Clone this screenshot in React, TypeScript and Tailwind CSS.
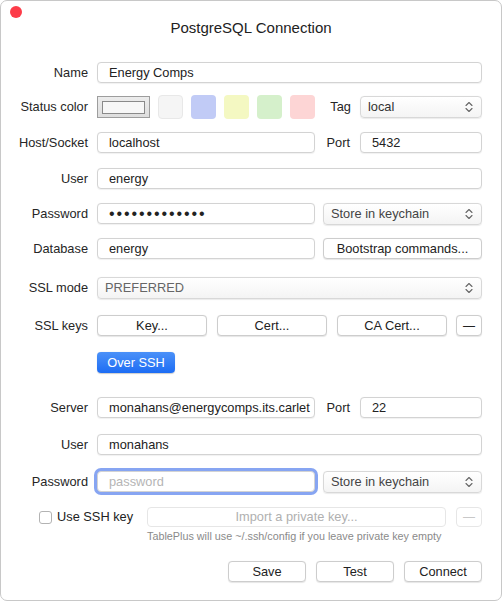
import React from "react";

const Chevrons = () => (
  <svg width="8" height="12" viewBox="0 0 8 12" fill="none" className="shrink-0">
    <path d="M1 4.5 L4 1.5 L7 4.5" stroke="#666" strokeWidth="1.1" strokeLinecap="round" strokeLinejoin="round" />
    <path d="M1 7.5 L4 10.5 L7 7.5" stroke="#666" strokeWidth="1.1" strokeLinecap="round" strokeLinejoin="round" />
  </svg>
);

const inputCls =
  "h-[21px] border border-[#d3d3d3] rounded-[4px] bg-white flex items-center pl-[11px] text-[#222] overflow-hidden whitespace-nowrap shadow-[0_0.5px_1px_rgba(0,0,0,0.06)]";
const selectCls =
  "h-[22px] border border-[#d8d8d8] rounded-[4px] bg-gradient-to-b from-white to-[#f4f4f4] flex items-center justify-between pl-[7px] pr-[8px] text-[#333] whitespace-nowrap shadow-[0_0.5px_1px_rgba(0,0,0,0.08)]";
const btnCls =
  "h-[21px] border border-[#cdcdcd] rounded-[4px] bg-white flex items-center justify-center text-[#222] whitespace-nowrap shadow-[0_0.5px_1px_rgba(0,0,0,0.1)]";

function Row({ label, mt, h = "h-[21px]", children }: { label: string; mt: string; h?: string; children?: React.ReactNode }) {
  return (
    <div className={`flex items-center ${mt} ${h}`}>
      <div className="w-[87px] shrink-0 text-right text-[#262626]">{label}</div>
      <div className="ml-[9px] w-[385px] flex items-center h-full">{children}</div>
    </div>
  );
}

export default function App() {
  return (
    <div
      className="w-[503px] h-[602px] bg-white text-[12.8px]"
      style={{ fontFamily: '"Liberation Sans", Arial, sans-serif' }}
    >
      <div className="relative w-[502px] h-[601px] border border-[#c8c8c8] rounded-[7px] bg-white overflow-hidden">
        <div className="absolute left-[9px] top-[5px] w-[12px] h-[12px] rounded-full bg-[#fd3c49]" />
        <div className="h-[55px] flex items-center justify-center text-[15px] text-[#222]">
          PostgreSQL Connection
        </div>

        <Row label="Name" mt="mt-[6px]">
          <div className={`${inputCls} w-[385px]`}>Energy Comps</div>
        </Row>

        <Row label="Status color" mt="mt-[12px]" h="h-[24px]">
          <div className="w-[53px] h-[22px] border border-[#9d9d9d] bg-gradient-to-b from-[#ececec] to-[#dedede] flex items-center justify-center">
            <div className="w-[43px] h-[13px] border border-[#8a8a8a] bg-[#f7f7f7]" />
          </div>
          <div className="ml-[8px] w-[25px] h-[24px] rounded-[4px] bg-[#f5f5f5] border border-[#e8e8e8]" />
          <div className="ml-[8px] w-[25px] h-[24px] rounded-[4px] bg-[#c1cbf6]" />
          <div className="ml-[8px] w-[25px] h-[24px] rounded-[4px] bg-[#f4f8c2]" />
          <div className="ml-[8px] w-[25px] h-[24px] rounded-[4px] bg-[#d5f0cb]" />
          <div className="ml-[8px] w-[25px] h-[24px] rounded-[4px] bg-[#fdd5d5]" />
          <div className="ml-auto flex items-center">
            <span className="text-[#262626]">Tag</span>
            <div className={`${selectCls} ml-[9px] w-[122px]`}>
              <span>local</span>
              <Chevrons />
            </div>
          </div>
        </Row>

        <Row label="Host/Socket" mt="mt-[13px]">
          <div className={`${inputCls} w-[218px]`}>localhost</div>
          <div className="ml-auto flex items-center">
            <span className="text-[#262626]">Port</span>
            <div className={`${inputCls} ml-[10px] w-[122px]`}>5432</div>
          </div>
        </Row>

        <Row label="User" mt="mt-[15px]">
          <div className={`${inputCls} w-[385px]`}>energy</div>
        </Row>

        <Row label="Password" mt="mt-[14px]">
          <div className={`${inputCls} w-[218px] text-[16px] tracking-[1.9px] leading-none`}>•••••••••••••</div>
          <div className={`${selectCls} ml-auto w-[159px] text-[#444]`}>
            <span>Store in keychain</span>
            <Chevrons />
          </div>
        </Row>

        <Row label="Database" mt="mt-[14px]">
          <div className={`${inputCls} w-[218px]`}>energy</div>
          <div className={`${btnCls} ml-auto w-[159px]`}>Bootstrap commands...</div>
        </Row>

        <Row label="SSL mode" mt="mt-[18px]">
          <div className={`${selectCls} w-[385px] h-[21px] text-[#666]`}>
            <span>PREFERRED</span>
            <Chevrons />
          </div>
        </Row>

        <Row label="SSL keys" mt="mt-[17px]">
          <div className={`${btnCls} w-[110px]`}>Key...</div>
          <div className={`${btnCls} ml-[10px] w-[110px]`}>Cert...</div>
          <div className={`${btnCls} ml-[10px] w-[110px]`}>CA Cert...</div>
          <div className={`${btnCls} ml-auto w-[26px] text-[12px]`}>—</div>
        </Row>

        <Row label="" mt="mt-[16px]">
          <div className="w-[78px] h-[21px] rounded-[4px] bg-gradient-to-b from-[#4b91f8] to-[#1c6cf4] text-white flex items-center justify-center shadow-[0_0.5px_1px_rgba(0,0,0,0.2)]">
            Over SSH
          </div>
        </Row>

        <Row label="Server" mt="mt-[24px]">
          <div className={`${inputCls} w-[218px]`}>
            <span className="block w-[202px] overflow-hidden">monahans@energycomps.its.carlet</span>
          </div>
          <div className="ml-auto flex items-center">
            <span className="text-[#262626]">Port</span>
            <div className={`${inputCls} ml-[10px] w-[122px]`}>22</div>
          </div>
        </Row>

        <Row label="User" mt="mt-[16px]">
          <div className={`${inputCls} w-[385px]`}>monahans</div>
        </Row>

        <Row label="Password" mt="mt-[16px]">
          <div className={`${inputCls} w-[218px] border-[#a7baf2] ring-[3px] ring-[#87a5f2] text-[#b5b5b5]`}>password</div>
          <div className={`${selectCls} ml-auto w-[159px] text-[#444]`}>
            <span>Store in keychain</span>
            <Chevrons />
          </div>
        </Row>

        <div className="mt-[15px] h-[20px] flex items-center">
          <div className="w-[146px] shrink-0 flex items-center pl-[38px]">
            <div className="w-[13px] h-[13px] rounded-[3px] border border-[#b3b3b3] bg-white" />
            <span className="ml-[5px] text-[#222]">Use SSH key</span>
          </div>
          <div className="w-[299px] h-[20px] rounded-[4px] border border-[#e6e6e6] bg-white flex items-center justify-center text-[#b0b0b0] whitespace-nowrap">
            Import a private key...
          </div>
          <div className="ml-[10px] w-[26px] h-[20px] rounded-[4px] border border-[#e6e6e6] bg-white flex items-center justify-center text-[#c8c8c8] text-[12px]">
            —
          </div>
        </div>

        <div className="mt-[3px] h-[12px] pl-[146px] flex items-center text-[10.8px] text-[#8a8a8a] whitespace-nowrap">
          TablePlus will use ~/.ssh/config if you leave private key empty
        </div>

        <div className="mt-[19px] flex justify-end pr-[19px]">
          <div className={`${btnCls} w-[78px] h-[20px]`}>Save</div>
          <div className={`${btnCls} ml-[10px] w-[78px] h-[20px]`}>Test</div>
          <div className={`${btnCls} ml-[10px] w-[78px] h-[20px]`}>Connect</div>
        </div>
      </div>
    </div>
  );
}
